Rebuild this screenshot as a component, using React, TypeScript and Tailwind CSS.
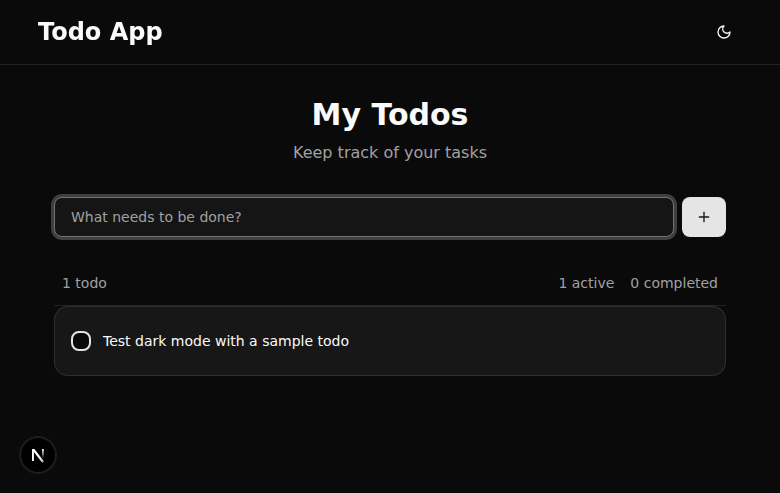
import { Plus } from "lucide-react";

function MoonIcon() {
  return (
    <svg
      className="h-4 w-4"
      viewBox="0 0 24 24"
      fill="none"
      stroke="currentColor"
      strokeWidth="2"
      strokeLinecap="round"
      strokeLinejoin="round"
    >
      <path d="M12 3a6 6 0 0 0 9 9 9 9 0 1 1-9-9Z" />
    </svg>
  );
}

function NextMark() {
  return (
    <svg width="36" height="36" viewBox="0 0 36 36" fill="none">
      <defs>
        <linearGradient id="diagonal" x1="19" y1="19" x2="24.5" y2="26.5" gradientUnits="userSpaceOnUse">
          <stop stopColor="white" />
          <stop offset="0.6" stopColor="white" stopOpacity="0.8" />
          <stop offset="1" stopColor="white" stopOpacity="0.1" />
        </linearGradient>
        <linearGradient id="stem" x1="22.9" y1="12.5" x2="22.9" y2="21.5" gradientUnits="userSpaceOnUse">
          <stop stopColor="white" />
          <stop offset="1" stopColor="white" stopOpacity="0" />
        </linearGradient>
      </defs>
      <path d="M12 12h2.4l9.7 12.6-1.8 1.3-8.4-10.9v9H12Z" fill="url(#diagonal)" />
      <path d="M22.9 12v9.5" stroke="url(#stem)" strokeWidth="1.7" />
    </svg>
  );
}

export default function App() {
  return (
    <div className="min-h-screen bg-[#0a0a0a] font-['DejaVu_Sans',sans-serif] text-[#fafafa]">
      <header className="border-b border-white/10 backdrop-blur">
        <div className="flex h-16 items-center justify-between px-[38px]">
          <h1 className="text-2xl font-bold">Todo App</h1>
          <button aria-label="Toggle theme" className="flex h-9 w-9 items-center justify-center">
            <MoonIcon />
          </button>
        </div>
      </header>
      <main className="mx-auto w-[672px] pt-8">
        <div className="text-center">
          <h2 className="mb-2 text-3xl font-bold">My Todos</h2>
          <p className="text-base text-[#a1a1a1]">Keep track of your tasks</p>
        </div>
        <form className="mt-8 flex gap-2">
          <input
            placeholder="What needs to be done?"
            className="h-10 flex-1 rounded-lg border border-[#737373] bg-[#151515] px-4 text-sm ring-3 ring-[#737373]/50 outline-none placeholder:text-[#a1a1a1]"
          />
          <button type="button" aria-label="Add" className="flex h-10 w-11 items-center justify-center rounded-lg bg-[#e5e5e5] text-[#171717]">
            <Plus className="h-4 w-4" />
          </button>
        </form>
        <div className="mt-6 flex justify-between border-b border-white/10 px-2 py-3 text-sm text-[#a1a1a1]">
          <span>1 todo</span>
          <div className="flex gap-4">
            <span>1 active</span>
            <span>0 completed</span>
          </div>
        </div>
        <div className="flex h-[70px] items-center gap-3 rounded-[14px] border border-white/10 bg-[#171717] px-4">
          <span className="h-5 w-5 rounded-lg border-2 border-[#e5e5e5] bg-[#0a0a0a]" />
          <span className="text-sm">Test dark mode with a sample todo</span>
        </div>
      </main>
      <div className="fixed bottom-5 left-5 h-9 w-9 rounded-full bg-black shadow-[0_0_0_1px_#1d1d1d,inset_0_0_0_1px_#252525]">
        <NextMark />
      </div>
    </div>
  );
}
